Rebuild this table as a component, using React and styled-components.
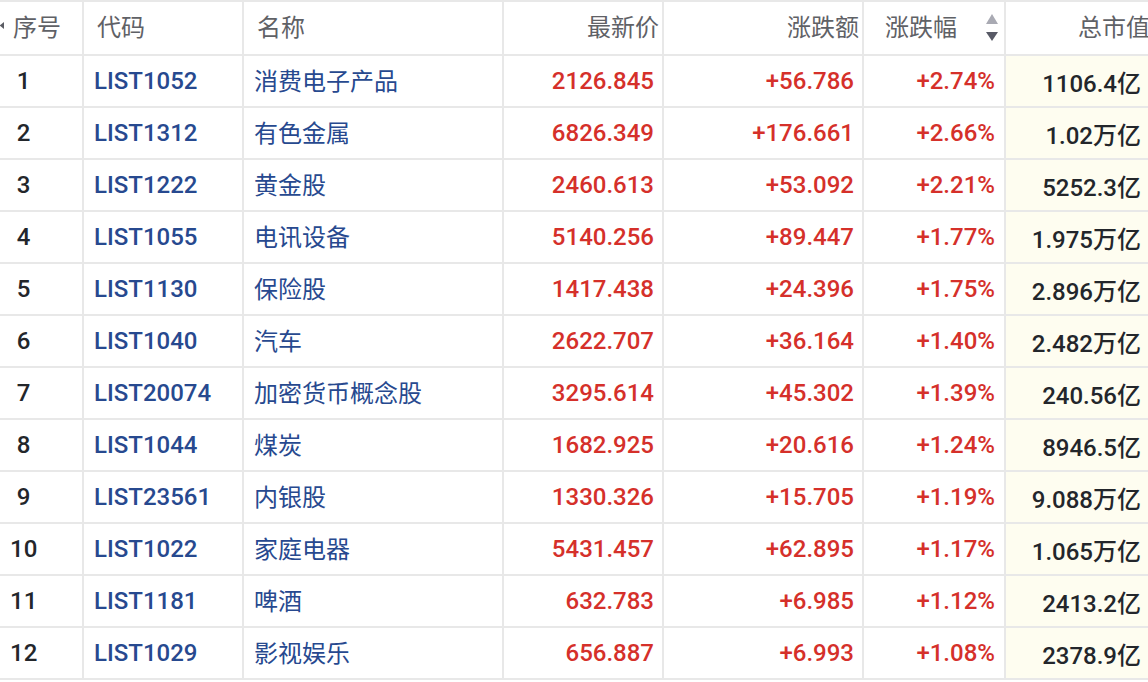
import styled, { createGlobalStyle } from "styled-components";

const GlobalStyle = createGlobalStyle`
  html, body {
    margin: 0;
    padding: 0;
    background: #fff;
    overflow: hidden;
  }
  body {
    font-family: Roboto, "Noto Sans CJK SC", "Noto Sans", sans-serif;
  }
`;

const COLS = "82px 158px 258px 158px 198px 140px 147px";

const Wrapper = styled.div`
  width: 1148px;
  height: 682px;
  overflow: hidden;
  background: #fff;
`;

const Table = styled.div`
  width: 1153px;
  display: flex;
  flex-direction: column;
  gap: 2px;
  background: #e8e8e8;
  padding: 2px 0;
`;

const Row = styled.div`
  display: grid;
  grid-template-columns: ${COLS};
  column-gap: 2px;
  height: ${(p) => (p.$head ? 52 : 50)}px;
`;

const Cell = styled.div`
  display: flex;
  align-items: center;
  justify-content: ${(p) => (p.$right ? "flex-end" : "flex-start")};
  padding: ${(p) => (p.$right ? `0 ${p.$pr || 8}px 0 0` : "0 0 0 10px")};
  background: ${(p) => (p.$cap ? "#fefdf0" : "#fff")};
  font-size: 24px;
  font-weight: 500;
  white-space: nowrap;
  overflow: hidden;
  color: ${(p) => p.$color || "#23262b"};
`;

const NameCell = styled(Cell)`
  font-weight: 400;
  padding-bottom: 3px;
`;

const Index = styled.span`
  display: inline-block;
  width: 27px;
  text-align: center;
`;

const HeadCell = styled(Cell)`
  color: #5f6166;
  font-weight: 400;
  padding: ${(p) => (p.$right ? "0 3px 5px 0" : "0 0 5px 13px")};
`;

const SortHead = styled(HeadCell)`
  justify-content: space-between;
  padding: 0 6px 0 21px;

  span {
    padding-bottom: 5px;
  }
`;

const EdgeMark = styled.i`
  display: block;
  flex: none;
  width: 4px;
  height: 7px;
  margin: 0 9px 0 -13px;
  background: #5a5c63;
  clip-path: polygon(0 45%, 100% 0, 100% 100%, 0 55%);
`;

const rows = [
  ["1", "LIST1052", "消费电子产品", "2126.845", "+56.786", "+2.74%", "1106.4亿"],
  ["2", "LIST1312", "有色金属", "6826.349", "+176.661", "+2.66%", "1.02万亿"],
  ["3", "LIST1222", "黄金股", "2460.613", "+53.092", "+2.21%", "5252.3亿"],
  ["4", "LIST1055", "电讯设备", "5140.256", "+89.447", "+1.77%", "1.975万亿"],
  ["5", "LIST1130", "保险股", "1417.438", "+24.396", "+1.75%", "2.896万亿"],
  ["6", "LIST1040", "汽车", "2622.707", "+36.164", "+1.40%", "2.482万亿"],
  ["7", "LIST20074", "加密货币概念股", "3295.614", "+45.302", "+1.39%", "240.56亿"],
  ["8", "LIST1044", "煤炭", "1682.925", "+20.616", "+1.24%", "8946.5亿"],
  ["9", "LIST23561", "内银股", "1330.326", "+15.705", "+1.19%", "9.088万亿"],
  ["10", "LIST1022", "家庭电器", "5431.457", "+62.895", "+1.17%", "1.065万亿"],
  ["11", "LIST1181", "啤酒", "632.783", "+6.985", "+1.12%", "2413.2亿"],
  ["12", "LIST1029", "影视娱乐", "656.887", "+6.993", "+1.08%", "2378.9亿"],
];

const BLUE = "#27498f";
const RED = "#d5302a";

function SortIcon() {
  return (
    <svg width="12" height="28" viewBox="0 0 12 28">
      <polygon points="6,0 12,10 0,10" fill="#a9aab3" />
      <polygon points="0,18 12,18 6,27" fill="#585a66" />
    </svg>
  );
}

export default function App() {
  return (
    <Wrapper>
      <GlobalStyle />
      <Table>
        <Row $head>
          <HeadCell>
            <EdgeMark />
            序号
          </HeadCell>
          <HeadCell>代码</HeadCell>
          <HeadCell>名称</HeadCell>
          <HeadCell $right>最新价</HeadCell>
          <HeadCell $right>涨跌额</HeadCell>
          <SortHead>
            <span>涨跌幅</span>
            <SortIcon />
          </SortHead>
          <HeadCell $right>总市值</HeadCell>
        </Row>
        {rows.map(([no, code, name, price, chg, pct, cap]) => (
          <Row key={code}>
            <Cell>
              <Index>{no}</Index>
            </Cell>
            <Cell $color={BLUE}>{code}</Cell>
            <NameCell $color={BLUE}>{name}</NameCell>
            <Cell $right $color={RED}>{price}</Cell>
            <Cell $right $color={RED}>{chg}</Cell>
            <Cell $right $color={RED} $pr={9}>{pct}</Cell>
            <Cell $right $cap $pr={12}>{cap}</Cell>
          </Row>
        ))}
      </Table>
    </Wrapper>
  );
}
